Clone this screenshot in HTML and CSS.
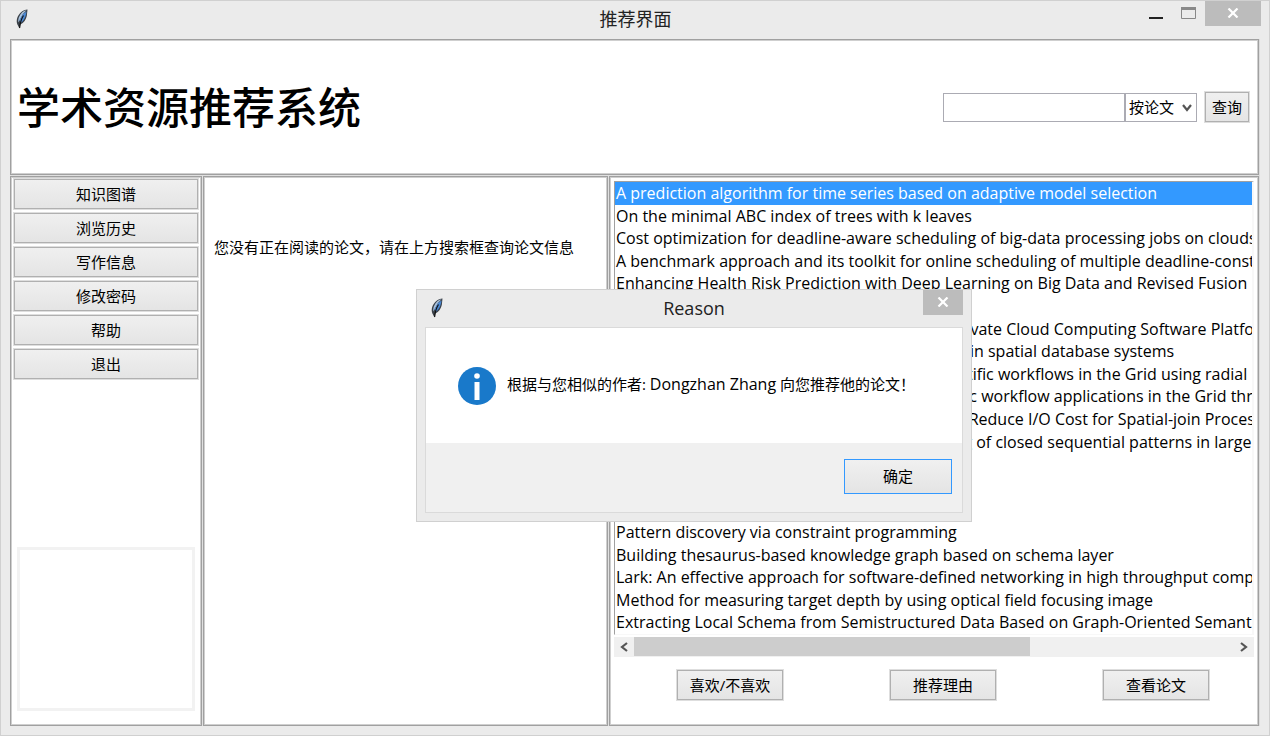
FILE: index.html
```
<!DOCTYPE html>
<html lang="zh-CN">
<head>
    <meta charset="UTF-8">
    <meta name="viewport" content="width=device-width, initial-scale=1.0">
    <title>推荐界面</title>
    <link rel="stylesheet" href="styles.css">
</head>
<body>
  <svg class="defs" width="0" height="0">
    <symbol id="feather" viewBox="0 0 12 20">
      <path d="M11.500.5C7 1 3 4 1.200 9c-.7 2.500-.6 4.500.2 6.500L3.500 19.500l.8-4C8 14 10 10.500 10.800 7z" fill="#3a4048"/>
      <path d="M10.500 1.300C7 2 4.500 4.500 2.800 8.500c-.6 2-.7 3.500-.4 5L7 5z" fill="#a9c0d8"/>
      <path d="M10.500 2.500C10 7 8.300 11.500 4.600 14L3.500 11 7 5z" fill="#4a88d4"/>
      <path d="M7.500 6.500C5.500 9.500 4.200 13 3.600 19" fill="none" stroke="#111" stroke-width="1.200"/>
    </symbol>
    <symbol id="cross" viewBox="0 0 12 10">
      <path d="M1.500.5l9 9M10.500.5l-9 9" fill="none" stroke="#fff" stroke-width="2.200"/>
    </symbol>
  </svg>

  <div class="window">
    <div class="titlebar">
      <svg class="feather"><use href="#feather"/></svg>
      <span class="caption">推荐界面</span>
      <div class="window-controls">
        <button class="control" aria-label="最小化">
          <svg width="14" height="12"><path d="M0 11h14" stroke="#222" stroke-width="2"/></svg>
        </button>
        <button class="control" aria-label="最大化">
          <svg width="15" height="12"><path d="M.5 1.500h14v10H.5z" fill="none" stroke="#888"/><path d="M0 1.500h15" stroke="#888" stroke-width="3"/></svg>
        </button>
        <button class="control close" aria-label="关闭">
          <svg width="12" height="10"><use href="#cross"/></svg>
        </button>
      </div>
    </div>

    <div class="client">
      <header class="panel header">
        <h1>学术资源推荐系统</h1>
        <form class="search">
          <input type="text" aria-label="关键词">
          <div class="select-box">
            <select aria-label="查询方式">
              <option>按论文</option>
              <option>按作者</option>
            </select>
            <svg class="arrow" width="10" height="8"><path d="M1 1l4 5 4-5" fill="none" stroke="#555" stroke-width="2.200"/></svg>
          </div>
          <button type="button" class="btn">查询</button>
        </form>
      </header>

      <nav class="panel sidebar">
        <button class="btn">知识图谱</button>
        <button class="btn">浏览历史</button>
        <button class="btn">写作信息</button>
        <button class="btn">修改密码</button>
        <button class="btn">帮助</button>
        <button class="btn">退出</button>
        <div class="picture"></div>
      </nav>

      <main class="panel reading">
        <p>您没有正在阅读的论文，请在上方搜索框查询论文信息</p>
      </main>

      <section class="panel recommend">
        <ul class="papers">
          <li class="selected">A prediction algorithm for time series based on adaptive model selection</li>
          <li>On the minimal ABC index of trees with k leaves</li>
          <li>Cost optimization for deadline-aware scheduling of big-data processing jobs on clouds</li>
          <li>A benchmark approach and its toolkit for online scheduling of multiple deadline-constrained workflows</li>
          <li>Enhancing Health Risk Prediction with Deep Learning on Big Data and Revised Fusion Node Paradigm</li>
          <li></li>
          <li>Design and Implementation of an Enterprise Private Cloud Computing Software Platform</li>
          <li>Incremental query processing of moving object in spatial database systems</li>
          <li>Predicting the execution performances of scientific workflows in the Grid using radial basis function</li>
          <li>Performance analysis and prediction of scientific workflow applications in the Grid through clustering</li>
          <li>Graph Partitioning Based Clustering Method to Reduce I/O Cost for Spatial-join Processing</li>
          <li>An efficient distributed algorithm for the mining of closed sequential patterns in large databases</li>
          <li></li>
          <li></li>
          <li></li>
          <li>Pattern discovery via constraint programming</li>
          <li>Building thesaurus-based knowledge graph based on schema layer</li>
          <li>Lark: An effective approach for software-defined networking in high throughput computing clusters</li>
          <li>Method for measuring target depth by using optical field focusing image</li>
          <li>Extracting Local Schema from Semistructured Data Based on Graph-Oriented Semantic Model</li>
        </ul>
        <div class="scrollbar">
          <button aria-label="向左"><svg width="8" height="10"><path d="M7 1L2 5l5 4" fill="none" stroke="#555" stroke-width="2.200"/></svg></button>
          <div class="track"><div class="thumb"></div></div>
          <button aria-label="向右"><svg width="8" height="10"><path d="M1 1l5 4-5 4" fill="none" stroke="#555" stroke-width="2.200"/></svg></button>
        </div>
        <div class="actions">
          <button class="btn">喜欢/不喜欢</button>
          <button class="btn">推荐理由</button>
          <button class="btn">查看论文</button>
        </div>
      </section>
    </div>
  </div>

  <div class="dialog" role="dialog" aria-label="Reason">
    <div class="titlebar">
      <svg class="feather"><use href="#feather"/></svg>
      <span class="caption">Reason</span>
      <div class="window-controls">
        <button class="control close" aria-label="关闭">
          <svg width="12" height="10"><use href="#cross"/></svg>
        </button>
      </div>
    </div>
    <div class="dialog-body">
      <div class="message">
        <svg width="38" height="38" viewBox="0 0 38 38">
          <circle cx="19" cy="19" r="19" fill="#1979ca"/>
          <circle cx="19" cy="9" r="2.800" fill="#fff"/>
          <path d="M19 15v18" stroke="#fff" stroke-width="5"/>
        </svg>
        <p>根据与您相似的作者: <span class="author">Dongzhan Zhang</span> 向您推荐他的论文！</p>
      </div>
      <div class="dialog-footer">
        <button class="btn ok">确定</button>
      </div>
    </div>
  </div>
</body>
</html>
```
FILE: styles.css
```
*{
    box-sizing: border-box;
}

body{
    margin: 0;
    font-family: "Open Sans", "Noto Sans CJK SC", sans-serif;
    font-size: 15px;
    color: #000;
}

h1, p, ul{
    margin: 0;
    padding: 0;
}

button, input, select{
    font: inherit;
    color: inherit;
    margin: 0;
}

.defs{
    position: absolute;
}

.window{
    display: flex;
    flex-direction: column;
    min-height: 100vh;
    padding: 0 8px 9px 9px;
    background-color: #ebebeb;
    border: 1px solid #d0d0d0;
}

/* title bars */
.titlebar{
    position: relative;
    display: flex;
    justify-content: center;
    height: 38px;
    line-height: 36px;
    font-size: 18px;
    color: #222;
}

.feather{
    position: absolute;
    left: 6px;
    top: 8px;
    width: 12px;
    height: 20px;
}

.window-controls{
    position: absolute;
    top: 0;
    right: 0;
    display: flex;
}

.control{
    display: flex;
    justify-content: center;
    width: 32px;
    height: 25px;
    padding: 6px 0 0;
    border: none;
    background: none;
}

.control.close{
    width: 56px;
    padding-top: 7px;
    margin-left: 1px;
    background-color: #bcbcbc;
}

/* frames */
.client{
    flex: 1;
    display: grid;
    grid-template-columns: 192px 405fr 650fr;
    grid-template-rows: auto 1fr;
    gap: 1px;
    margin-right: 1px;
    border-right: 1px solid #dcdcdc;
    background-color: #e0e0e0;
}

.panel{
    min-width: 0;
    border: 1px solid #a0a0a0;
    box-shadow: inset 0 0 0 1px #cfcfcf;
    background-color: #fff;
}

.header{
    grid-column: 1 / 4;
    display: flex;
    justify-content: space-between;
    align-items: center;
    padding: 43px 8px 43px 6px;
}

h1{
    padding-bottom: 4px;
    font-family: "Noto Sans CJK SC", sans-serif;
    font-size: 43px;
    font-weight: 500;
    line-height: 44px;
}

.search{
    display: flex;
    align-items: center;
}

.search input{
    width: 182px;
    height: 29px;
    border: 1px solid #ababb3;
    background-color: #fff;
}

.select-box{
    position: relative;
    margin-right: 7px;
}

.search select{
    display: block;
    width: 72px;
    height: 29px;
    padding: 0 3px;
    border: 1px solid #ababb3;
    border-radius: 0;
    background-color: #fff;
    appearance: none;
}

.arrow{
    position: absolute;
    right: 5px;
    top: 11px;
}

.btn{
    height: 32px;
    padding: 0 7px 1px;
    line-height: 20px;
    border: 1px solid #dedede;
    box-shadow: inset 0 0 0 1px #b0b0b0;
    background: linear-gradient(#f0f0f0, #e4e4e4);
}

/* left column */
.sidebar{
    display: flex;
    flex-direction: column;
    gap: 2px;
    padding: 1px 2px;
}

.picture{
    height: 164px;
    margin: auto 4px 13px;
    border: 3px solid #f2f2f2;
}

.reading{
    padding: 59px 10px;
    line-height: 22px;
}

/* right column */
.recommend{
    display: flex;
    flex-direction: column;
    padding: 4px;
}

.papers{
    flex: 1;
    display: grid;
    grid-template-rows: repeat(20, 1fr);
    overflow: hidden;
    list-style: none;
    font-size: 16px;
    line-height: 22px;
    white-space: nowrap;
    border: 1px solid #a0a0a0;
    border-right: 2px solid #f8f8f8;
    border-bottom-color: #f8f8f8;
}

.papers li{
    padding-left: 1px;
    overflow: hidden;
}

.papers .selected{
    color: #fff;
    background-color: #3399ff;
}

.scrollbar{
    display: flex;
    height: 20px;
    margin-top: 2px;
    background-color: #f0f0f0;
}

.scrollbar button{
    display: flex;
    justify-content: center;
    align-items: center;
    width: 20px;
    padding: 0;
    border: none;
    background: none;
}

.track{
    flex: 1;
}

.thumb{
    width: 66%;
    height: 19px;
    background-color: #cdcdcd;
}

.actions{
    display: flex;
    justify-content: space-between;
    padding: 12px 44px 20px 62px;
}

.actions .btn{
    width: 108px;
}

/* message box */
.dialog{
    position: absolute;
    left: 416px;
    top: 289px;
    width: 556px;
    padding: 0 8px 8px;
    background-color: #ebebeb;
    border: 1px solid #d0d0d0;
}

.dialog .titlebar{
    height: 37px;
}

.dialog .control.close{
    width: 40px;
}

.dialog-body{
    border: 1px solid #dadada;
    background-color: #f0f0f0;
}

.message{
    display: flex;
    align-items: center;
    gap: 11px;
    height: 115px;
    padding-left: 32px;
    line-height: 20px;
    background-color: #fff;
}

.message p{
    padding-bottom: 4px;
}

.author{
    font-size: 16px;
}

.dialog-footer{
    display: flex;
    justify-content: flex-end;
    padding: 16px 10px 18px;
}

.btn.ok{
    width: 108px;
    height: 35px;
    border: 1px solid #3399ff;
    box-shadow: none;
}
```
